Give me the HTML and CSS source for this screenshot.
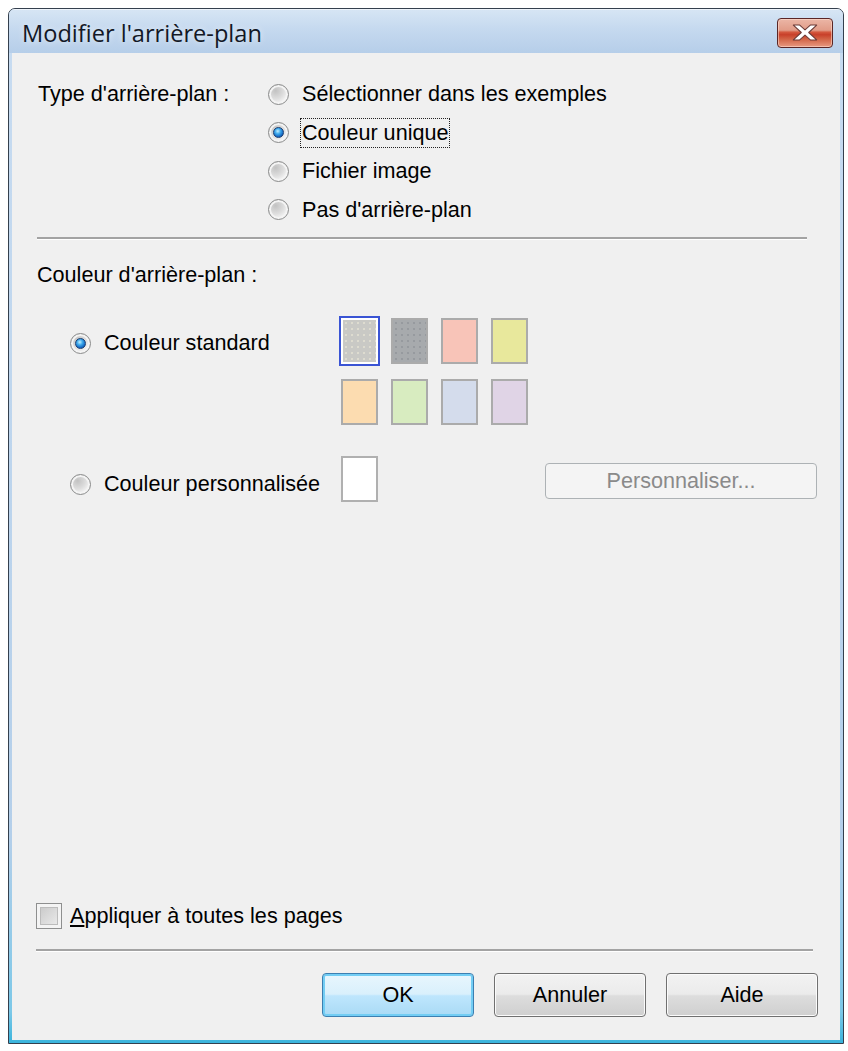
FILE: index.html
```html
<!DOCTYPE html>
<html lang="fr">
<head>
<meta charset="utf-8">
<title>Modifier l'arrière-plan</title>
<link rel="stylesheet" href="styles.css">
</head>
<body>
<div class="window">
  <div class="titlebar">
    <span class="title">Modifier l'arrière-plan</span>
    <div class="close">
      <svg width="26" height="17" viewBox="0 0 24 16"><path d="M1 1H7L12 5.5L17 1H23L15.5 8L23 15H17L12 10.5L7 15H1L8.5 8Z" fill="#fff" stroke="#6b3a36" stroke-width="1" stroke-linejoin="round"/></svg>
    </div>
  </div>
  <div class="client">
    <div class="type-section">
      <div class="type-label">Type d'arrière-plan :</div>
      <div class="type-options">
        <div class="opt"><span class="radio"></span><span>Sélectionner dans les exemples</span></div>
        <div class="opt"><span class="radio checked"></span><span class="focus">Couleur unique</span></div>
        <div class="opt"><span class="radio"></span><span>Fichier image</span></div>
        <div class="opt"><span class="radio"></span><span>Pas d'arrière-plan</span></div>
      </div>
    </div>
    <div class="sep sep-top"></div>
    <div class="color-label">Couleur d'arrière-plan :</div>
    <div class="std-row">
      <div class="opt opt-color"><span class="radio checked"></span><span>Couleur standard</span></div>
      <div class="swatches">
        <span class="swatch sw1 sel"></span>
        <span class="swatch sw2"></span>
        <span class="swatch sw3"></span>
        <span class="swatch sw4"></span>
        <span class="swatch sw5"></span>
        <span class="swatch sw6"></span>
        <span class="swatch sw7"></span>
        <span class="swatch sw8"></span>
      </div>
    </div>
    <div class="custom-row">
      <div class="opt opt-color opt-custom"><span class="radio"></span><span>Couleur personnalisée</span></div>
      <span class="custom-box"></span>
      <button class="btn btn-disabled" type="button">Personnaliser...</button>
    </div>
    <div class="spacer"></div>
    <div class="apply-row"><span class="checkbox"></span><span><u>A</u>ppliquer à toutes les pages</span></div>
    <div class="sep sep-bottom"></div>
    <div class="buttons">
      <button class="btn btn-default" type="button">OK</button>
      <button class="btn" type="button">Annuler</button>
      <button class="btn" type="button">Aide</button>
    </div>
  </div>
</div>
</body>
</html>
```

FILE: styles.css
```css
body {
  margin: 0;
  background: #ffffff;
  font-family: "Liberation Sans", Arial, sans-serif;
  font-size: 21.6px;
  color: #000;
}

.window {
  box-sizing: border-box;
  width: 836px;
  height: 1036px;
  margin: 8px 0 0 8px;
  border: 1px solid #34404e;
  border-radius: 7px 7px 0 0;
  background: linear-gradient(#c8dcf1, #b4cfea 80%, #7cc8e8 97%, #3ab4dc);
  display: flex;
  flex-direction: column;
  overflow: hidden;
}

.titlebar {
  box-sizing: border-box;
  height: 44px;
  flex: none;
  display: flex;
  align-items: center;
  padding: 0 10px 0 13px;
  border-top: 1px solid #eef4fb;
  background: linear-gradient(#d6e5f4, #c5d9ef 45%, #b6cee9);
}

.title {
  flex: 1;
  font-family: "Open Sans", "Noto Sans", sans-serif;
  font-size: 23.6px;
  color: #131826;
  padding-top: 2px;
  text-shadow: 0 0 6px rgba(255, 255, 255, 0.7);
}

.close {
  box-sizing: border-box;
  width: 56px;
  height: 30px;
  margin-top: 2px;
  border: 1px solid #5a2626;
  border-radius: 4px;
  background: linear-gradient(#ebb6a6 0%, #e19c88 40%, #d4583e 47%, #c8402a 56%, #d26446 72%, #e89a82 100%);
  box-shadow: inset 0 0 0 1px rgba(255, 222, 210, 0.55);
  display: flex;
  align-items: center;
  justify-content: center;
}

.client {
  flex: 1;
  margin: 0 3px 3px;
  background: #f0f0f0;
  display: flex;
  flex-direction: column;
  padding: 0 22px 23px 25px;
  min-height: 0;
}

.type-section {
  display: grid;
  grid-template-columns: 231px 1fr;
  margin-top: 22px;
}

.type-label {
  height: 38.5px;
  display: flex;
  align-items: center;
  padding-left: 1px;
}

.opt {
  height: 38.5px;
  display: flex;
  align-items: center;
  gap: 13px;
  line-height: 26px;
  white-space: nowrap;
}

.focus {
  border: 1px dotted #222;
  padding: 1px 1px;
  margin-left: -2px;
}

.radio {
  box-sizing: border-box;
  flex: none;
  width: 21px;
  height: 21px;
  border-radius: 50%;
  border: 1px solid #8a8b8b;
  background: radial-gradient(circle at 35% 30%, #c2c2c2 0%, #dedede 45%, #f7f7f7 75%);
  box-shadow: inset 0 0 0 2px #f4f4f4;
  display: flex;
  align-items: center;
  justify-content: center;
}

.radio.checked::after {
  content: "";
  box-sizing: border-box;
  width: 11px;
  height: 11px;
  border-radius: 50%;
  border: 1px solid #1b3e72;
  background: radial-gradient(circle at 42% 35%, #c4eeff 0%, #3eaaec 35%, #1466c2 70%, #0c3f86 100%);
}

.sep {
  height: 2px;
  background: #a3a3a3;
  border-bottom: 1px solid #ffffff;
  flex: none;
}

.sep-top {
  margin: 8px 11px 0 0;
}

.color-label {
  margin-top: 22px;
  line-height: 26px;
}

.std-row {
  display: flex;
  align-items: flex-start;
  margin-top: 30px;
  padding-left: 33px;
}

.opt-color {
  box-sizing: border-box;
  width: 271px;
  height: 26px;
  margin-top: 12px;
  flex: none;
}

.swatches {
  display: grid;
  grid-template-columns: repeat(4, 37px);
  grid-auto-rows: 46px;
  column-gap: 13px;
  row-gap: 15px;
}

.swatch {
  box-sizing: border-box;
  border: 2px solid #ababab;
  background-size: 6px 6px;
}

.swatch.sel {
  border-color: #ffffff;
  outline: 2px solid #3a54d4;
}

.sw1 { background-color: #c9c9c5; background-image: radial-gradient(circle, rgba(255, 250, 225, 0.4) 0.7px, transparent 1.2px); }
.sw2 { background-color: #a7aaad; background-image: radial-gradient(circle, rgba(60, 70, 80, 0.16) 0.7px, transparent 1.2px); }
.sw3 { background-color: #f8c4b8; }
.sw4 { background-color: #e8e89c; }
.sw5 { background-color: #fcdcb0; }
.sw6 { background-color: #d8ecc0; }
.sw7 { background-color: #d4dcec; }
.sw8 { background-color: #e0d4e6; }

.custom-row {
  display: flex;
  align-items: flex-start;
  margin-top: 31px;
  padding-left: 33px;
}

.opt-custom {
  margin-top: 15px;
}

.custom-box {
  box-sizing: border-box;
  flex: none;
  width: 37px;
  height: 46px;
  border: 2px solid #b0b0b0;
  background: #ffffff;
}

.btn {
  box-sizing: border-box;
  flex: none;
  width: 152px;
  height: 44px;
  padding: 0;
  font-family: "Liberation Sans", Arial, sans-serif;
  font-size: 21.6px;
  color: #000;
  border: 1px solid #707070;
  border-radius: 4px;
  background: linear-gradient(#f2f2f2 0%, #ebebeb 48%, #dddddd 52%, #cfcfcf 100%);
  box-shadow: inset 0 0 0 1px #fbfbfb;
}

.btn-default {
  border: 1px solid #3c7fb1;
  background: linear-gradient(#e8f6fd 0%, #d9f0fc 48%, #bee6fd 52%, #a9daf5 100%);
  box-shadow: inset 0 0 0 2px #72cdf4;
}

.btn-disabled {
  width: 272px;
  height: 36px;
  margin-left: 167px;
  margin-top: 7px;
  color: #8a8a8a;
  border-color: #adb2b5;
  background: #f4f4f4;
  box-shadow: none;
}

.spacer {
  flex: 1;
}

.apply-row {
  display: flex;
  align-items: center;
  gap: 8px;
  height: 26px;
  margin-left: -1px;
  line-height: 26px;
  white-space: nowrap;
}

.checkbox {
  box-sizing: border-box;
  flex: none;
  width: 26px;
  height: 26px;
  border: 1px solid #8e8f8f;
  background: linear-gradient(135deg, #c4c4c4, #f0f0f0);
  box-shadow: inset 0 0 0 3px #f4f4f4, inset 0 0 0 4px #bcbcbc;
}

.sep-bottom {
  margin: 20px 5px 0 -1px;
}

.buttons {
  display: flex;
  justify-content: flex-end;
  gap: 20px;
  margin-top: 21px;
}
```
